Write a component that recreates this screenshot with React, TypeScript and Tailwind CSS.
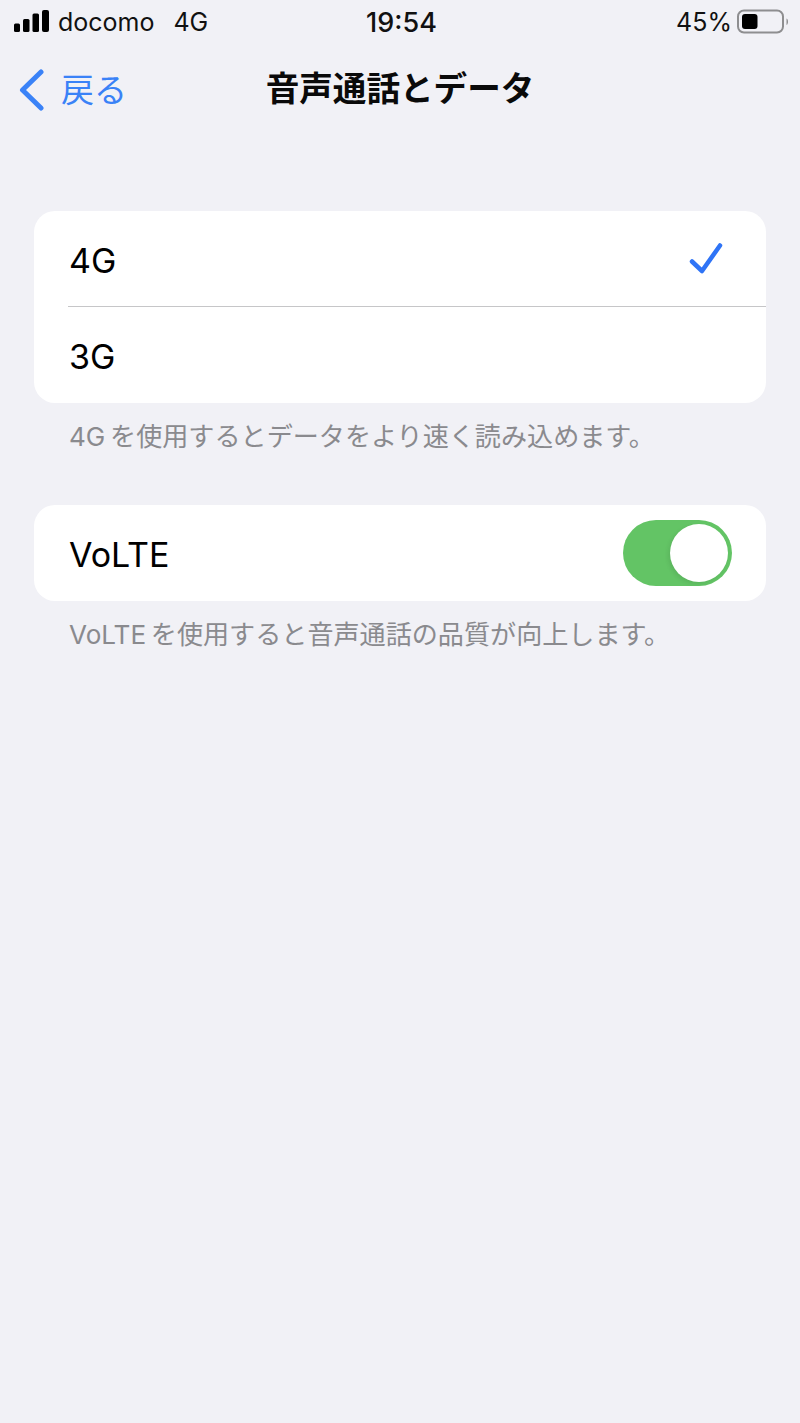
const font = "font-['Inter','Noto_Sans_CJK_JP',sans-serif]";

const SignalBars = () => (
  <svg width="36" height="24" viewBox="0 0 36 24" className="block">
    <rect x="0" y="13.5" width="6" height="8.5" rx="1.5" fill="#000" />
    <rect x="9" y="9" width="6.5" height="13" rx="1.5" fill="#000" />
    <rect x="18.5" y="3.5" width="6.5" height="18.5" rx="1.5" fill="#000" />
    <rect x="28" y="0" width="7" height="22" rx="2" fill="#000" />
  </svg>
);

const Battery = () => (
  <svg width="52" height="26" viewBox="0 0 52 26" className="block">
    <rect x="1" y="1.5" width="45" height="22" rx="6" fill="none" stroke="#8e8e90" strokeWidth="2" />
    <rect x="5" y="5" width="15.5" height="15" rx="3" fill="#000" />
    <path d="M49.5 9.5c1.2.6 1.5 1.9 1.5 3.2s-.3 2.6-1.5 3.2z" fill="#8e8e90" />
  </svg>
);

const StatusBar = () => (
  <div className="flex h-[44px] items-center justify-between pl-[14px] pr-[11px] text-[25px] leading-none text-[#111]">
    <div className="flex w-[300px] items-center">
      <SignalBars />
      <span className="ml-[8px]">docomo</span>
      <span className="ml-[19px]">4G</span>
    </div>
    <span className="text-[27px] font-medium">19:54</span>
    <div className="flex w-[300px] items-center justify-end gap-[5px]">
      <span>45%</span>
      <Battery />
    </div>
  </div>
);

const NavBar = () => (
  <div className="relative mt-[1px] flex h-[88px] items-center justify-center">
    <div className="absolute left-[19px] top-[24px] flex items-center gap-[17px] text-[#3a82f7]">
      <svg width="25" height="42" viewBox="0 0 25 42" className="block">
        <path d="M22 3 3.5 21 22 39" fill="none" stroke="#3a82f7" strokeWidth="5" strokeLinecap="round" strokeLinejoin="round" />
      </svg>
      <span className="text-[33px] leading-none">戻る</span>
    </div>
    <h1 className="text-[33.6px] font-bold leading-none text-[#0a0a0a]">音声通話とデータ</h1>
  </div>
);

const Card = ({ children }: { children: React.ReactNode }) => (
  <div className="mx-[34px] overflow-hidden rounded-[21px] bg-white">{children}</div>
);

const Row = ({ label, children }: { label: string; children?: React.ReactNode }) => (
  <div className="flex h-full min-h-[95px] items-center justify-between pl-[35px] text-[34px] leading-none text-black">
    <span className="pt-[4px]">{label}</span>
    {children}
  </div>
);

const Toggle = () => (
  <div className="mr-[34px] flex h-[66px] w-[109px] items-center justify-end rounded-full bg-[#63c465] pr-[4px]">
    <div className="size-[58px] rounded-full bg-white shadow-[-2px_2px_4px_rgba(0,0,0,0.08)]" />
  </div>
);

const Footnote = ({ children }: { children: React.ReactNode }) => (
  <p className="mx-[34px] pl-[35px] text-[26.1px] leading-none text-[#8a8a8e]">{children}</p>
);

export default function App() {
  return (
    <div className={`${font} h-[1423px] w-[800px] overflow-hidden bg-[#f1f1f6]`}>
      <StatusBar />
      <NavBar />
      <div className="pt-[78px]">
        <Card>
          <div className="h-[95px]">
            <Row label="4G">
              <svg width="34" height="34" viewBox="0 0 34 34" className="mr-[43px] block">
                <path d="M3 19.5 13 29 31 3.5" fill="none" stroke="#2f74f6" strokeWidth="4.5" strokeLinecap="round" strokeLinejoin="round" />
              </svg>
            </Row>
          </div>
          <div className="ml-[34px] h-px bg-[#c6c6c8]" />
          <div className="h-[96px]">
            <Row label="3G" />
          </div>
        </Card>
        <div className="pt-[21px]">
          <Footnote>4G&#8201;を使用するとデータをより速く読み込めます。</Footnote>
        </div>
        <div className="pt-[55px]">
          <Card>
            <div className="h-[96px]">
              <Row label="VoLTE">
                <Toggle />
              </Row>
            </div>
          </Card>
        </div>
        <div className="pt-[21px]">
          <Footnote>VoLTE&#8201;を使用すると音声通話の品質が向上します。</Footnote>
        </div>
      </div>
    </div>
  );
}
